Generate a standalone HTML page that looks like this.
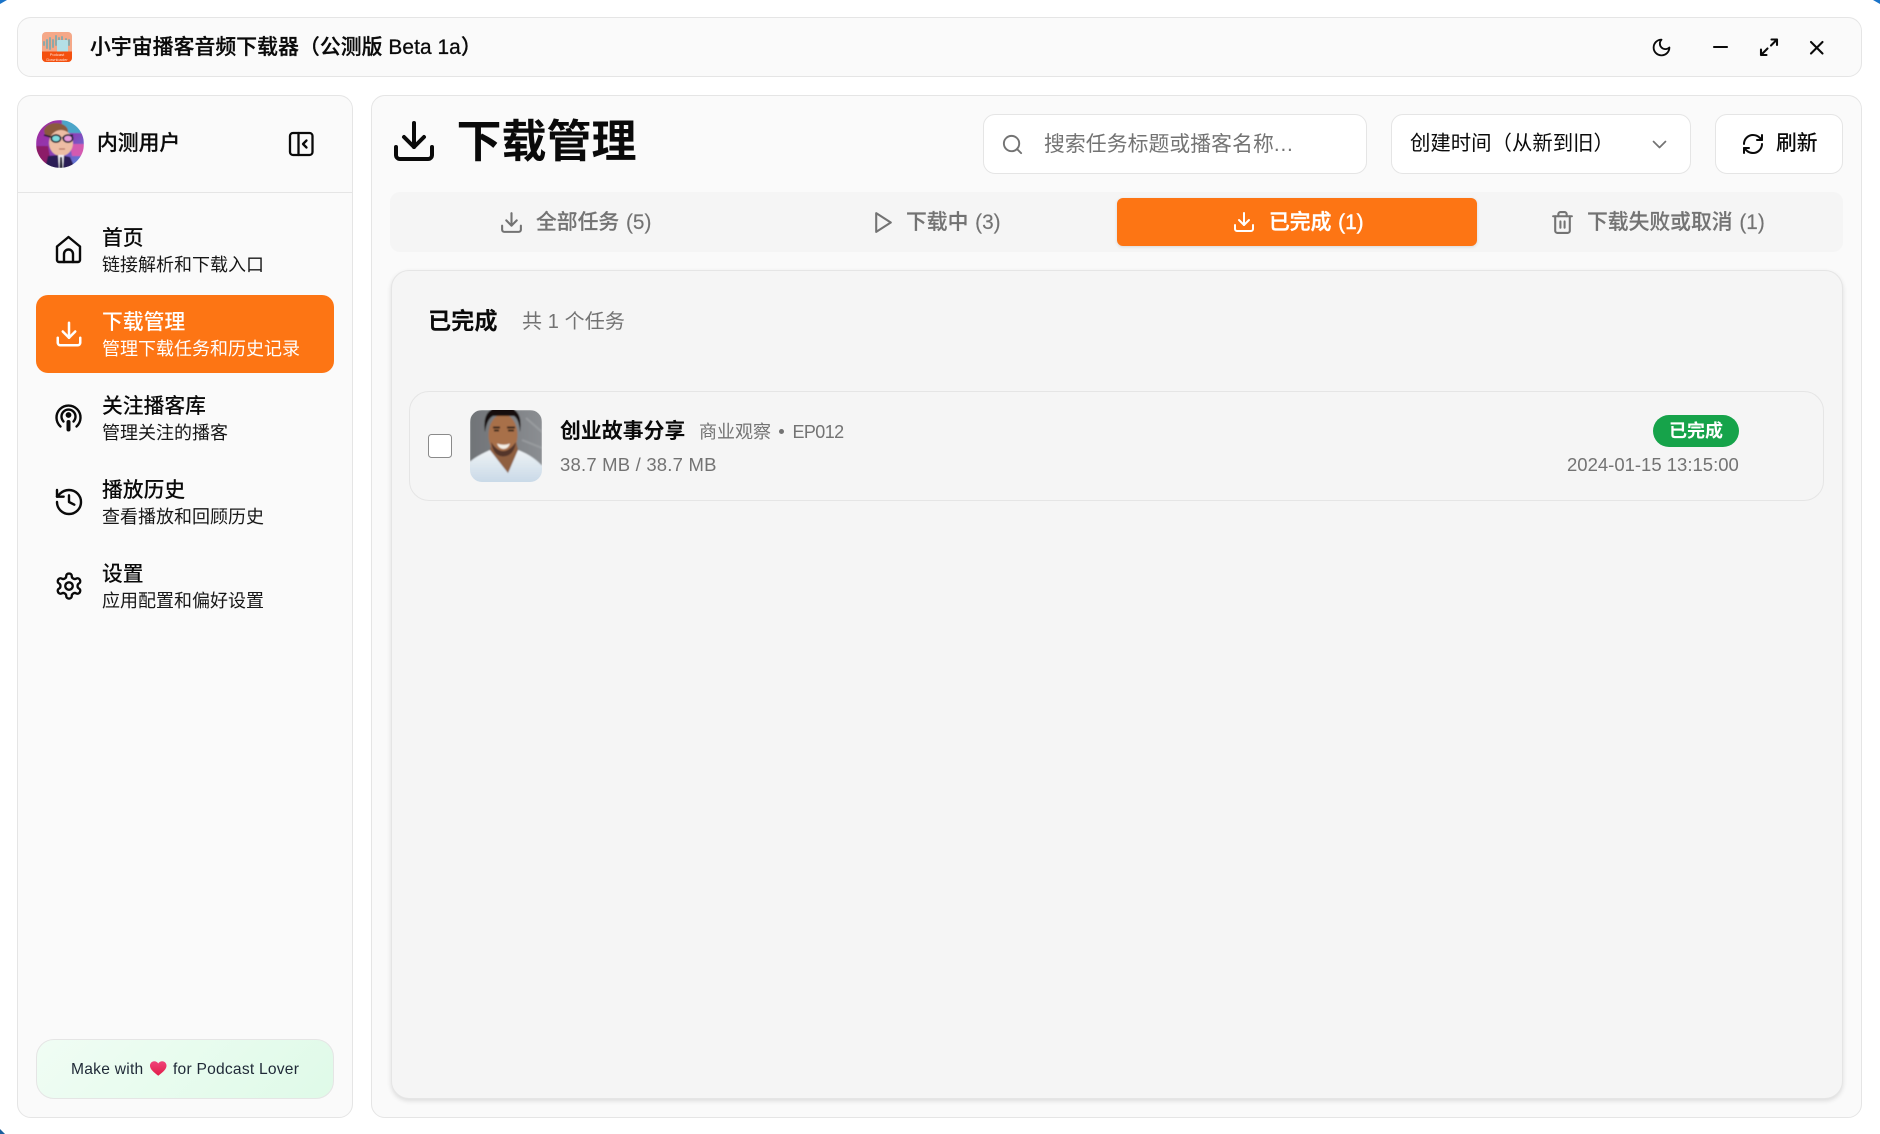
<!DOCTYPE html>
<html lang="zh-CN">
<head>
<meta charset="utf-8">
<title>小宇宙播客音频下载器</title>
<style>
*{box-sizing:border-box;margin:0;padding:0}
html,body{width:1880px;height:1134px;overflow:hidden;background:#fff}
body{position:relative;font-family:"Liberation Sans","Noto Sans CJK SC",sans-serif;color:#0a0a0a}
.b{position:absolute;border:1.2px solid #e5e5e5}
.t{position:absolute;white-space:nowrap;line-height:30px;height:30px}
svg{position:absolute;overflow:visible}
.i{fill:none;stroke:currentColor;stroke-linecap:round;stroke-linejoin:round}
.n{font-size:20.8px;font-weight:500;color:#0a0a0a}
.s{font-size:18px;color:#171717}
.g{color:#737373}
.tab{font-size:20.8px;font-weight:500;color:#737373;word-spacing:1px;-webkit-text-stroke:.15px #737373}
</style>
</head>
<body>
<!-- screen corners -->
<svg style="left:0;top:0" width="8" height="4"><path d="M0 0H7L0 4Z" fill="#1a73c8"/></svg>
<svg style="left:1872px;top:0" width="8" height="4"><path d="M8 0H1L8 4Z" fill="#1a73c8"/></svg>
<svg style="left:0;top:1129px" width="6" height="5"><path d="M0 5V0L5 5Z" fill="#1a5f9e"/></svg>

<!-- title bar -->
<div class="b" style="left:17px;top:17px;width:1845px;height:60px;border-radius:14px;background:#fafafa"></div>
<svg style="left:42px;top:32px" width="30" height="30" viewBox="0 0 30 30">
<defs><clipPath id="lc"><rect width="30" height="30" rx="4"/></clipPath></defs>
<g clip-path="url(#lc)">
<rect width="30" height="30" fill="#f5a888"/>
<path d="M2 13v-3M5 16V8M8 17V6M11 15V8M14 13V4M17 14V6M20 13V5M24 12V7M27 13V8" stroke="#8fa9a8" stroke-width="2" stroke-linecap="round"/>
<rect x="15" y="8" width="11" height="12" rx="1" fill="#b4dfe6"/>
<rect y="19.500" width="30" height="10.500" fill="#f4500f"/>
<text x="15" y="24" font-size="4" fill="#ffe3d6" text-anchor="middle" font-family="Liberation Sans">Podcast</text>
<text x="15" y="28.800" font-size="4" fill="#ffe3d6" text-anchor="middle" font-family="Liberation Sans">Downloader</text>
</g>
</svg>
<div class="t" style="left:90px;top:33px;font-size:20.8px;font-weight:500;-webkit-text-stroke:.3px #0a0a0a;letter-spacing:.1px">小宇宙播客音频下载器（公测版 Beta 1a）</div>
<svg class="i" style="left:1650.500px;top:37px;color:#0a0a0a" width="21" height="21" viewBox="0 0 24 24" stroke-width="2.100"><path d="M12 3a6 6 0 0 0 9 9 9 9 0 1 1-9-9Z"/></svg>
<svg class="i" style="left:1700px;top:30px;color:#0a0a0a" width="150" height="32" viewBox="1700 30 150 32" stroke-width="2.100">
<path d="M1714 47H1727"/>
<path d="M1761 55L1767.500 48.500M1761 49.500V55H1766.500"/>
<path d="M1771 45.500L1777 39.500M1771.500 39.500H1777V45"/>
<path d="M1811 42L1822.500 53.500M1822.500 42L1811 53.500"/>
</svg>

<!-- sidebar -->
<div class="b" style="left:17px;top:95px;width:336px;height:1023px;border-radius:14px;background:#fafafa"></div>
<div style="position:absolute;left:18px;top:192px;width:334px;height:1.2px;background:#e5e5e5"></div>
<svg style="left:36px;top:120px" width="48" height="48" viewBox="0 0 48 48">
<defs>
<clipPath id="ac"><circle cx="24" cy="24" r="24"/></clipPath>
<linearGradient id="ab" x1="0" y1="0" x2="1" y2="1"><stop offset="0" stop-color="#a5269a"/><stop offset=".55" stop-color="#8a3fb8"/><stop offset="1" stop-color="#4f8fe0"/></linearGradient>
<filter id="bl"><feGaussianBlur stdDeviation=".45"/></filter>
</defs>
<g clip-path="url(#ac)"><g filter="url(#bl)">
<rect width="48" height="48" fill="url(#ab)"/>
<rect x="26" width="22" height="13" fill="#4ca5c8"/>
<path d="M0 26h12l4 22H0z" fill="#8c1f68"/>
<path d="M34 24h14v12H36z" fill="#d45ab0"/>
<ellipse cx="20" cy="11" rx="12" ry="8" fill="#8a5a3e"/>
<ellipse cx="25" cy="23" rx="12" ry="13" fill="#edbda4"/>
<path d="M9 48 12 36l11-1 11 2 5 11z" fill="#2a1f55"/>
<path d="M22 35l6 0 -1 13h-4z" fill="#f0eef5"/>
<path d="M24 37l2 0 .6 11h-3z" fill="#15122b"/>
<path d="M8 15l7 2M26 18l11-3" stroke="#1d1a2e" stroke-width="1.600"/>
<ellipse cx="20" cy="18.500" rx="5.500" ry="4.400" fill="#223"/>
<ellipse cx="32" cy="18.500" rx="5.500" ry="4.400" fill="#223"/>
<ellipse cx="20" cy="18.500" rx="3.800" ry="2.800" fill="#7fdde0"/>
<ellipse cx="32" cy="18.500" rx="3.800" ry="2.800" fill="#e79be0"/>
<path d="M23 29h6" stroke="#b26f5e" stroke-width="1.200"/>
</g></g>
</svg>
<div class="t" style="left:97px;top:129px;font-size:20.8px;font-weight:500;-webkit-text-stroke:.2px #0a0a0a">内测用户</div>
<svg class="i" style="left:288px;top:131px;color:#0a0a0a" width="26" height="26" viewBox="0 0 26 26" stroke-width="2.300">
<rect x="2" y="2" width="22.500" height="22" rx="3"/><path d="M10.500 2V24"/><path d="M18.500 9.500L15 13L18.500 16.500"/>
</svg>

<!-- nav -->
<svg class="i" style="left:54px;top:235px;color:#0a0a0a" width="28" height="28" viewBox="0 0 28 28" stroke-width="2.400">
<path d="M14.500 2L26 11.500V25a2 2 0 0 1-2 2H5a2 2 0 0 1-2-2V11.500Z"/><path d="M10 27V19a4.500 4.500 0 0 1 9 0V27"/>
</svg>
<div class="t n" style="left:102px;top:224px">首页</div>
<div class="t s" style="left:102px;top:250px">链接解析和下载入口</div>

<div style="position:absolute;left:36px;top:295px;width:298px;height:78px;border-radius:12px;background:#fd7514"></div>
<svg class="i" style="left:54px;top:319px;color:#fff" width="30" height="30" viewBox="0 0 24 24" stroke-width="2">
<path d="M21 15v4a2 2 0 0 1-2 2H5a2 2 0 0 1-2-2v-4"/><path d="M7 10l5 5 5-5"/><path d="M12 15V3"/>
</svg>
<div class="t n" style="left:102px;top:308px;color:#fff">下载管理</div>
<div class="t s" style="left:102px;top:334px;color:#fff">管理下载任务和历史记录</div>

<svg class="i" style="left:54px;top:402px;color:#0a0a0a" width="30" height="30" viewBox="55 403 30 30" stroke-width="2.400">
<path d="M61.500 427.500A12 12 0 1 1 77.500 427.500"/>
<path d="M64.500 422.500A7 7 0 1 1 74.500 422.500"/>
<circle cx="69.500" cy="416" r="2.400" fill="currentColor" stroke-width="1"/>
<path d="M69.500 423V430.500" stroke-width="4"/>
</svg>
<div class="t n" style="left:102px;top:392px">关注播客库</div>
<div class="t s" style="left:102px;top:418px">管理关注的播客</div>

<svg class="i" style="left:53px;top:486px;color:#0a0a0a" width="32" height="32" viewBox="0 0 24 24" stroke-width="1.800">
<path d="M3 12a9 9 0 1 0 9-9 9.750 9.750 0 0 0-6.740 2.740L3 8"/><path d="M3 3v5h5"/><path d="M12 7v5l4 2"/>
</svg>
<div class="t n" style="left:102px;top:476px">播放历史</div>
<div class="t s" style="left:102px;top:502px">查看播放和回顾历史</div>

<svg class="i" style="left:53.500px;top:571px;color:#0a0a0a" width="30" height="30" viewBox="0 0 24 24" stroke-width="1.900">
<path d="M12.220 2h-.44a2 2 0 0 0-2 2v.18a2 2 0 0 1-1 1.730l-.43.25a2 2 0 0 1-2 0l-.15-.08a2 2 0 0 0-2.730.73l-.22.38a2 2 0 0 0 .73 2.730l.15.1a2 2 0 0 1 1 1.720v.51a2 2 0 0 1-1 1.740l-.15.09a2 2 0 0 0-.73 2.730l.22.38a2 2 0 0 0 2.730.73l.15-.08a2 2 0 0 1 2 0l.43.25a2 2 0 0 1 1 1.730V20a2 2 0 0 0 2 2h.44a2 2 0 0 0 2-2v-.18a2 2 0 0 1 1-1.730l.43-.25a2 2 0 0 1 2 0l.15.08a2 2 0 0 0 2.730-.73l.22-.39a2 2 0 0 0-.73-2.730l-.15-.08a2 2 0 0 1-1-1.740v-.5a2 2 0 0 1 1-1.740l.15-.09a2 2 0 0 0 .73-2.730l-.22-.38a2 2 0 0 0-2.730-.73l-.15.08a2 2 0 0 1-2 0l-.43-.25a2 2 0 0 1-1-1.730V4a2 2 0 0 0-2-2z"/><circle cx="12" cy="12" r="3"/>
</svg>
<div class="t n" style="left:102px;top:560px">设置</div>
<div class="t s" style="left:102px;top:586px">应用配置和偏好设置</div>

<!-- footer -->
<div class="b" style="left:36px;top:1039px;width:298px;height:60px;border-radius:18px;background:linear-gradient(135deg,#f0fdf4,#dffae8)"></div>
<div class="t" style="left:71px;top:1055px;font-size:15.6px;color:#1f2937;letter-spacing:.25px">Make with</div>
<svg style="left:150px;top:1061px" width="16.500" height="15" viewBox="0 0 17 15">
<defs><linearGradient id="hg" x1="0" y1="0" x2="0" y2="1"><stop offset="0" stop-color="#f0437a"/><stop offset="1" stop-color="#e11d48"/></linearGradient></defs>
<path d="M8.500 15C3 10.800 0 8 0 4.600 0 2 2 0 4.400 0 6.100 0 7.600 .9 8.500 2.300 9.400 .9 10.900 0 12.600 0 15 0 17 2 17 4.600 17 8 14 10.800 8.500 15Z" fill="url(#hg)"/>
</svg>
<div class="t" style="left:173px;top:1055px;font-size:15.6px;color:#1f2937;letter-spacing:.23px">for Podcast Lover</div>

<!-- main -->
<div class="b" style="left:371px;top:95px;width:1491px;height:1023px;border-radius:14px;background:#fafafa"></div>
<svg class="i" style="left:390px;top:116.500px;color:#0a0a0a" width="48" height="48" viewBox="0 0 24 24" stroke-width="2">
<path d="M21 15v4a2 2 0 0 1-2 2H5a2 2 0 0 1-2-2v-4"/><path d="M7 10l5 5 5-5"/><path d="M12 15V3"/>
</svg>
<div class="t" style="left:456.500px;top:127px;font-size:45px;font-weight:700">下载管理</div>

<div class="b" style="left:983px;top:114px;width:384px;height:60px;border-radius:12px;background:#fff"></div>
<svg class="i" style="left:1001px;top:132.500px;color:#737373" width="23" height="23" viewBox="0 0 24 24" stroke-width="2"><circle cx="11" cy="11" r="8"/><path d="M21 21l-4.300-4.300"/></svg>
<div class="t g" style="left:1044px;top:130px;font-size:20.8px;letter-spacing:.1px">搜索任务标题或播客名称<span style="letter-spacing:.8px">...</span></div>

<div class="b" style="left:1391px;top:114px;width:300px;height:60px;border-radius:12px;background:#fff"></div>
<div class="t" style="left:1410px;top:128.500px;font-size:20.4px">创建时间（从新到旧）</div>
<svg class="i" style="left:1650px;top:138px;color:#737373" width="19" height="12" viewBox="0 0 19 12" stroke-width="1.700"><path d="M3.500 3.500L9.500 9.500L15.500 3.500"/></svg>

<div class="b" style="left:1715px;top:114px;width:128px;height:60px;border-radius:12px;background:#fff"></div>
<svg class="i" style="left:1740.500px;top:132px;color:#0a0a0a" width="24" height="24" viewBox="0 0 24 24" stroke-width="2">
<path d="M3 12a9 9 0 0 1 9-9 9.750 9.750 0 0 1 6.740 2.740L21 8"/><path d="M21 3v5h-5"/><path d="M21 12a9 9 0 0 1-9 9 9.750 9.750 0 0 1-6.740-2.740L3 16"/><path d="M8 16H3v5"/>
</svg>
<div class="t" style="left:1776px;top:128.500px;font-size:20.8px;font-weight:500">刷新</div>

<!-- tabs -->
<div style="position:absolute;left:390px;top:192px;width:1453px;height:60px;border-radius:10px;background:#f5f5f5"></div>
<div style="position:absolute;left:1117px;top:198px;width:360px;height:48px;border-radius:6px;background:#fd7514;box-shadow:0 1px 3px rgba(0,0,0,.12)"></div>
<svg class="i" style="left:498.500px;top:209.500px;color:#737373" width="25" height="25" viewBox="0 0 24 24" stroke-width="2"><path d="M21 15v4a2 2 0 0 1-2 2H5a2 2 0 0 1-2-2v-4"/><path d="M7 10l5 5 5-5"/><path d="M12 15V3"/></svg>
<div class="t tab" style="left:536px;top:208px">全部任务 (5)</div>
<svg class="i" style="left:871px;top:209.500px;color:#737373" width="25" height="25" viewBox="0 0 24 24" stroke-width="2"><path d="M5 3l14 9-14 9Z"/></svg>
<div class="t tab" style="left:906px;top:208px">下载中 (3)</div>
<svg class="i" style="left:1232px;top:210px;color:#fff" width="24" height="24" viewBox="0 0 24 24" stroke-width="2"><path d="M21 15v4a2 2 0 0 1-2 2H5a2 2 0 0 1-2-2v-4"/><path d="M7 10l5 5 5-5"/><path d="M12 15V3"/></svg>
<div class="t tab" style="left:1269px;top:208px;color:#fff;font-weight:500;-webkit-text-stroke:.4px #fff">已完成 (1)</div>
<svg class="i" style="left:1549.500px;top:209.500px;color:#737373" width="25" height="25" viewBox="0 0 24 24" stroke-width="2"><path d="M3 6h18"/><path d="M19 6v14a2 2 0 0 1-2 2H7a2 2 0 0 1-2-2V6"/><path d="M8 6V4a2 2 0 0 1 2-2h4a2 2 0 0 1 2 2v2"/><path d="M10 11v6M14 11v6"/></svg>
<div class="t tab" style="left:1587px;top:208px">下载失败或取消 (1)</div>

<!-- content panel -->
<div class="b" style="left:391px;top:270px;width:1452px;height:829px;border-radius:18px;background:#f5f5f5;box-shadow:0 2px 5px rgba(0,0,0,.12)"></div>
<div class="t" style="left:428px;top:306px;font-size:23.200px;font-weight:700">已完成</div>
<div class="t g" style="left:522px;top:307px;font-size:20px;letter-spacing:.1px">共 1 个任务</div>

<div class="b" style="left:409px;top:391px;width:1415px;height:110px;border-radius:20px"></div>
<div style="position:absolute;left:428px;top:434px;width:24px;height:24px;border:1.500px solid #8a8a8a;border-radius:3.500px;background:#fff"></div>
<svg style="left:470px;top:410px" width="72" height="72" viewBox="0 0 72 72">
<defs>
<clipPath id="tc"><rect width="72" height="72" rx="12"/></clipPath>
<linearGradient id="tb" x1="0" y1="0" x2="1" y2="0"><stop offset="0" stop-color="#707377"/><stop offset="1" stop-color="#8b8e92"/></linearGradient>
<linearGradient id="sh" x1="0" y1="0" x2="0" y2="1"><stop offset="0" stop-color="#eef2f5"/><stop offset="1" stop-color="#c6d7e6"/></linearGradient>
<filter id="bt"><feGaussianBlur stdDeviation=".9"/></filter>
</defs>
<g clip-path="url(#tc)"><g filter="url(#bt)">
<rect width="72" height="72" fill="url(#tb)"/>
<path d="M56 8L72 22M52 30L72 38" stroke="#a4a7aa" stroke-width="2" opacity=".6"/>
<path d="M-3 75V55Q2 48 20 40L38 63 48 40Q64 46 74 58V75Z" fill="url(#sh)"/>
<path d="M20 40L38 63 48 40 46 30H22Z" fill="#8f5f40"/>
<ellipse cx="33" cy="25" rx="14.500" ry="21" fill="#a8704a"/>
<path d="M15 22Q11 -3 33 -3 54 -3 50 22 49 9 44 6H23Q17 9 15 22Z" fill="#15110f"/>
<path d="M23 17.500h7M37 17.500h8" stroke="#2a1a12" stroke-width="2"/>
<path d="M24 20.500h5M38 20.500h6" stroke="#1e1410" stroke-width="1.700"/>
<path d="M21 32Q33 50 46 32 44 46 33 46.500 23 46 21 32Z" fill="#53352a"/>
<path d="M27 33.500Q34 36 40 33.500 38 39 33.500 39 29 39 27 33.500Z" fill="#f4efe6"/>
</g></g>
</svg>
<div class="t" style="left:560px;top:417px;font-size:20.800px;font-weight:700;letter-spacing:.1px">创业故事分享</div>
<div class="t g" style="left:699px;top:416.500px;font-size:18px">商业观察</div>
<div style="position:absolute;left:779px;top:429px;width:5px;height:5px;border-radius:50%;background:#737373"></div>
<div class="t g" style="left:792.500px;top:416.500px;font-size:18px;letter-spacing:-.6px">EP012</div>
<div class="t g" style="left:560px;top:450px;font-size:18.500px;letter-spacing:.2px">38.7 MB / 38.7 MB</div>
<div style="position:absolute;left:1653px;top:415px;width:86px;height:32px;border-radius:16px;background:#16a34a"></div>
<div class="t" style="left:1669px;top:416px;font-size:18px;font-weight:700;color:#fff">已完成</div>
<div class="t g" style="left:1567px;top:450px;font-size:18.500px">2024-01-15 13:15:00</div>
</body>
</html>
